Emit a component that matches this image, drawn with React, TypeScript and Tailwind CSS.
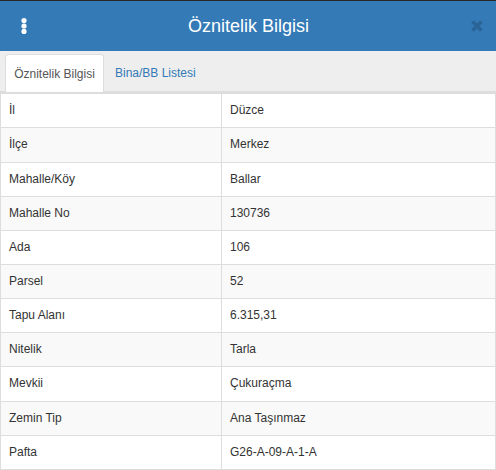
const rows = [
  ["İl", "Düzce"],
  ["İlçe", "Merkez"],
  ["Mahalle/Köy", "Ballar"],
  ["Mahalle No", "130736"],
  ["Ada", "106"],
  ["Parsel", "52"],
  ["Tapu Alanı", "6.315,31"],
  ["Nitelik", "Tarla"],
  ["Mevkii", "Çukuraçma"],
  ["Zemin Tip", "Ana Taşınmaz"],
  ["Pafta", "G26-A-09-A-1-A"],
];

export default function App() {
  return (
    <div className="h-[470px] w-[496px] overflow-hidden bg-white font-['Liberation_Sans',Arial,sans-serif] text-[12px] leading-[17.14px] text-[#333]">
      <div className="h-px bg-[#26282b]" />
      {/* header */}
      <div className="flex h-[50px] items-center bg-[#337ab7] pl-[21px] pr-[12px]">
        <svg width="6" height="16" viewBox="0 0 6 16" className="text-white">
          <circle cx="3" cy="2.6" r="2.6" fill="currentColor" />
          <circle cx="3" cy="8" r="2.6" fill="currentColor" />
          <circle cx="3" cy="13.4" r="2.6" fill="currentColor" />
        </svg>
        <h4 className="flex-1 text-center text-[18px] leading-[20px] text-white">Öznitelik Bilgisi</h4>
        <svg width="14" height="14" viewBox="0 0 14 14" className="text-[#2a6496]">
          <path d="M2.5 2.5 L11.5 11.5 M11.5 2.5 L2.5 11.5" stroke="currentColor" strokeWidth="3.6" />
        </svg>
      </div>
      {/* tabs */}
      <div className="flex h-[42.35px] items-end gap-[2px] border-b-2 border-[#ddd] bg-[#eee] pl-[5px]">
        <div className="-mb-px flex h-[38.5px] w-[99px] items-center justify-center rounded-t border border-b-0 border-[#ddd] bg-white pt-px text-[#555]">
          Öznitelik Bilgisi
        </div>
        <div className="-mb-px flex h-[38.5px] items-center px-[9px] pt-px text-[#337ab7]">Bina/BB Listesi</div>
      </div>
      {/* table */}
      <table className="w-full table-fixed border-collapse">
        <tbody>
          {rows.map(([label, value], i) => (
            <tr key={label} className={i % 2 === 1 ? "bg-[#f9f9f9]" : ""}>
              <td className="w-[221px] border border-[#ddd] p-2">{label}</td>
              <td className="border border-[#ddd] p-2">{value}</td>
            </tr>
          ))}
        </tbody>
      </table>
    </div>
  );
}
